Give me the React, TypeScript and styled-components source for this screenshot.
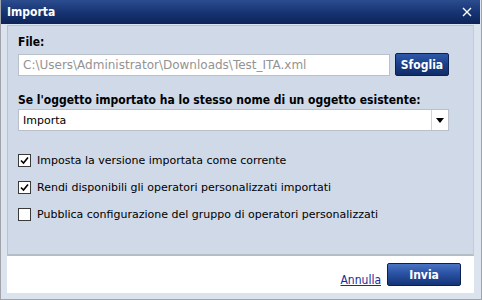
import styled, { createGlobalStyle } from "styled-components";

const GlobalStyle = createGlobalStyle`
  html, body {
    margin: 0;
    padding: 0;
    background: #ffffff;
  }
  body {
    font-family: "DejaVu Sans", sans-serif;
    font-size: 11px;
    color: #000;
  }
`;

const Window = styled.div`
  width: 482px;
  height: 300px;
  box-sizing: border-box;
  display: flex;
  flex-direction: column;
  border: 1px solid #a0a4aa;
  border-top: none;
  background: #dae3ee;
  padding: 0 1px 2px 0;
`;

const TitleBar = styled.div`
  height: 24px;
  display: flex;
  align-items: center;
  justify-content: space-between;
  padding: 0 8px 0 6px;
  background: linear-gradient(#2b4c8e, #173574 50%, #0c2358);
  color: #fff;
  font-family: "DejaVu Sans Condensed", "DejaVu Sans", sans-serif;
  font-weight: bold;
  font-size: 12px;
`;

const CloseIcon = styled.svg`
  width: 10px;
  height: 10px;
`;

const Body = styled.div`
  flex: 1;
  display: flex;
  flex-direction: column;
  padding: 1px 6px 4px 6px;
`;

const Panel = styled.div`
  border: 1px solid #b9c1cc;
  border-right-color: #c4cbd4;
  border-bottom: 2px solid #b4bcc6;
  background: #cfd9e8;
  padding: 9px 24px 0 10px;
  height: 231px;
  box-sizing: border-box;
`;

const Label = styled.div<{ $gap: number }>`
  font-family: "DejaVu Sans Condensed", "DejaVu Sans", sans-serif;
  font-weight: bold;
  font-size: 12px;
  line-height: 14px;
  margin-bottom: ${(p) => p.$gap}px;
`;

const Row = styled.div`
  display: flex;
  gap: 5px;
  align-items: center;
  margin-bottom: 17px;
`;

const TextField = styled.div`
  flex: 1;
  height: 22px;
  box-sizing: border-box;
  background: #fff;
  border: 1px solid #b9c0c9;
  color: #939393;
  font-size: 12px;
  padding: 0 4px;
  display: flex;
  align-items: center;
`;

const BlueButton = styled.button<{ $wide?: boolean }>`
  height: 23px;
  width: ${(p) => (p.$wide ? "74px" : "54px")};
  border: 1px solid #0c2050;
  border-radius: 2px;
  background: ${(p) =>
    p.$wide
      ? "linear-gradient(#4a73c4, #2a52a4 45%, #143476)"
      : "linear-gradient(#2e58a8, #1a3f88 50%, #102c68)"};
  color: #fff;
  font-family: "DejaVu Sans Condensed", "DejaVu Sans", sans-serif;
  font-weight: bold;
  font-size: 12px;
  padding: 0;
`;

const Select = styled.div`
  display: flex;
  height: 22px;
  box-sizing: border-box;
  background: #fff;
  border: 1px solid #b9c0c9;
  margin-bottom: 23px;
`;

const SelectValue = styled.div`
  flex: 1;
  display: flex;
  align-items: center;
  padding: 0 4px;
`;

const SelectArrow = styled.div`
  width: 16px;
  border-left: 1px solid #d0d4da;
  display: flex;
  align-items: center;
  justify-content: center;
`;

const CheckRow = styled.label`
  display: flex;
  align-items: center;
  gap: 6px;
  height: 13px;
  margin-bottom: 14px;
`;

const Box = styled.span`
  width: 13px;
  height: 13px;
  box-sizing: border-box;
  border: 1px solid #3a3a3a;
  background: #fff;
  display: flex;
  align-items: center;
  justify-content: center;
`;

const Footer = styled.div`
  flex: 1;
  background: #fff;
  display: flex;
  align-items: center;
  justify-content: flex-end;
  gap: 6px;
  padding-right: 13px;
`;

const Link = styled.a`
  color: #1a2a9a;
  text-decoration: underline;
  font-family: "DejaVu Sans Condensed", "DejaVu Sans", sans-serif;
  font-size: 12px;
  margin-top: 10px;
`;

const options = [
  { text: "Imposta la versione importata come corrente", checked: true },
  { text: "Rendi disponibili gli operatori personalizzati importati", checked: true },
  { text: "Pubblica configurazione del gruppo di operatori personalizzati", checked: false },
];

export default function App() {
  return (
    <>
      <GlobalStyle />
      <Window>
        <TitleBar>
          <span>Importa</span>
          <CloseIcon viewBox="0 0 10 10">
            <path d="M1 1L9 9M9 1L1 9" stroke="#fff" strokeWidth="1.4" />
          </CloseIcon>
        </TitleBar>
        <Body>
          <Panel>
            <Label $gap={4}>File:</Label>
            <Row>
              <TextField>C:\Users\Administrator\Downloads\Test_ITA.xml</TextField>
              <BlueButton>Sfoglia</BlueButton>
            </Row>
            <Label $gap={2}>Se l'oggetto importato ha lo stesso nome di un oggetto esistente:</Label>
            <Select>
              <SelectValue>Importa</SelectValue>
              <SelectArrow>
                <svg width="8" height="5" viewBox="0 0 8 5">
                  <path d="M0 0H8L4 5Z" fill="#000" />
                </svg>
              </SelectArrow>
            </Select>
            {options.map((o) => (
              <CheckRow key={o.text}>
                <Box>
                  {o.checked && (
                    <svg width="9" height="9" viewBox="0 0 9 9">
                      <path d="M1 4.5L3.5 7L8 1.5" stroke="#000" strokeWidth="1.6" fill="none" />
                    </svg>
                  )}
                </Box>
                {o.text}
              </CheckRow>
            ))}
          </Panel>
          <Footer>
            <Link>Annulla</Link>
            <BlueButton $wide>Invia</BlueButton>
          </Footer>
        </Body>
      </Window>
    </>
  );
}
